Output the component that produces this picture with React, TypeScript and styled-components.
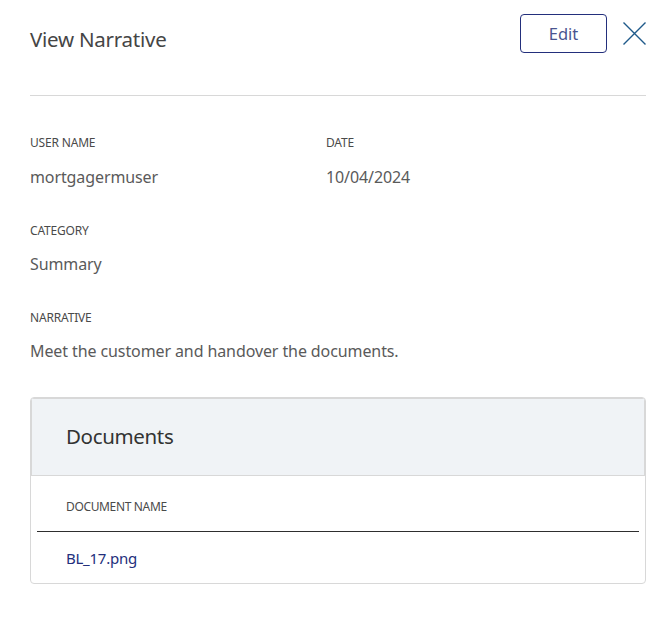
import React from 'react'
import styled, { createGlobalStyle } from 'styled-components'

const GlobalStyle = createGlobalStyle`
  html, body {
    margin: 0;
    padding: 0;
    background: #fff;
  }
  body {
    font-family: 'Noto Sans', 'Open Sans', sans-serif;
  }
`

const Page = styled.div`
  width: 667px;
  height: 625px;
  box-sizing: border-box;
  padding: 14px 21px 0 30px;
  overflow: hidden;
`
const Header = styled.div`
  display: flex;
  align-items: flex-start;
  justify-content: space-between;
  height: 81px;
  border-bottom: 1px solid #d8d8d8;
`
const Title = styled.h2`
  margin: 11px 0 0;
  font-size: 20.5px;
  line-height: 28px;
  font-weight: 400;
  letter-spacing: -0.25px;
  color: #454545;
`
const Actions = styled.div`
  display: flex;
  align-items: flex-start;
  gap: 16px;
`
const EditButton = styled.button`
  width: 87px;
  height: 39px;
  padding: 0;
  background: #fff;
  border: 1px solid #232f7c;
  border-radius: 4px;
  font-family: inherit;
  font-size: 16.5px;
  color: #4a5590;
`
const CloseButton = styled.button`
  width: 23px;
  height: 23px;
  margin-top: 8px;
  padding: 0;
  background: none;
  border: 0;
  display: block;
  svg {
    display: block;
  }
`
const FieldGrid = styled.div`
  display: grid;
  grid-template-columns: 296px 1fr;
  row-gap: 31.8px;
  padding-top: 38.3px;
`
const Field = styled.div<{ $wide?: boolean }>`
  grid-column: ${p => (p.$wide ? '1 / -1' : 'auto')};
`
const Label = styled.div`
  font-size: 12px;
  line-height: 18px;
  letter-spacing: -0.18px;
  color: #4a4a4a;
  text-transform: uppercase;
`
const Value = styled.div`
  margin-top: 12.5px;
  font-size: 16px;
  line-height: 25px;
  letter-spacing: -0.1px;
  color: #5a5a5a;
`
const Card = styled.section`
  margin-top: 32.6px;
  border: 1px solid #d8d8d8;
  border-radius: 4px;
  overflow: hidden;
`
const CardHeader = styled.div`
  height: 77px;
  box-sizing: content-box;
  display: flex;
  align-items: center;
  padding-left: 35px;
  background: #f0f3f6;
  border-bottom: 1px solid #d8d8d8;
  box-shadow: inset 0 1px 0 #d8d8d8, inset -1px 0 0 #d8d8d8, inset 1px 0 0 #d8d8d8;
  font-size: 20.5px;
  line-height: 26px;
  letter-spacing: -0.35px;
  color: #333;
`
const Table = styled.div`
  padding: 0 6px;
`
const ColumnHead = styled.div`
  height: 56px;
  box-sizing: border-box;
  padding: 22px 0 0 29px;
  border-bottom: 1px solid #2e2e2e;
  font-size: 12px;
  line-height: 18px;
  letter-spacing: -0.35px;
  color: #4a4a4a;
`
const Row = styled.div`
  height: 51px;
  box-sizing: border-box;
  padding: 14px 0 0 29px;
`
const FileLink = styled.a`
  font-size: 15px;
  line-height: 25px;
  letter-spacing: -0.25px;
  color: #232f7c;
  text-decoration: none;
`

export default function App() {
  return (
    <Page>
      <GlobalStyle />
      <Header>
        <Title>View Narrative</Title>
        <Actions>
          <EditButton>Edit</EditButton>
          <CloseButton aria-label='Close'>
            <svg width='23' height='23' viewBox='0 0 23 23' fill='none'>
              <path d='M0.5 0.5L22.5 22.5M22.5 0.5L0.5 22.5' stroke='#1f5a8a' strokeWidth='1.4' />
            </svg>
          </CloseButton>
        </Actions>
      </Header>
      <FieldGrid>
        <Field>
          <Label>User Name</Label>
          <Value>mortgagermuser</Value>
        </Field>
        <Field>
          <Label>Date</Label>
          <Value>10/04/2024</Value>
        </Field>
        <Field $wide>
          <Label>Category</Label>
          <Value>Summary</Value>
        </Field>
        <Field $wide>
          <Label>Narrative</Label>
          <Value>Meet the customer and handover the documents.</Value>
        </Field>
      </FieldGrid>
      <Card>
        <CardHeader>Documents</CardHeader>
        <Table>
          <ColumnHead>DOCUMENT NAME</ColumnHead>
          <Row>
            <FileLink href='#'>BL_17.png</FileLink>
          </Row>
        </Table>
      </Card>
    </Page>
  )
}
